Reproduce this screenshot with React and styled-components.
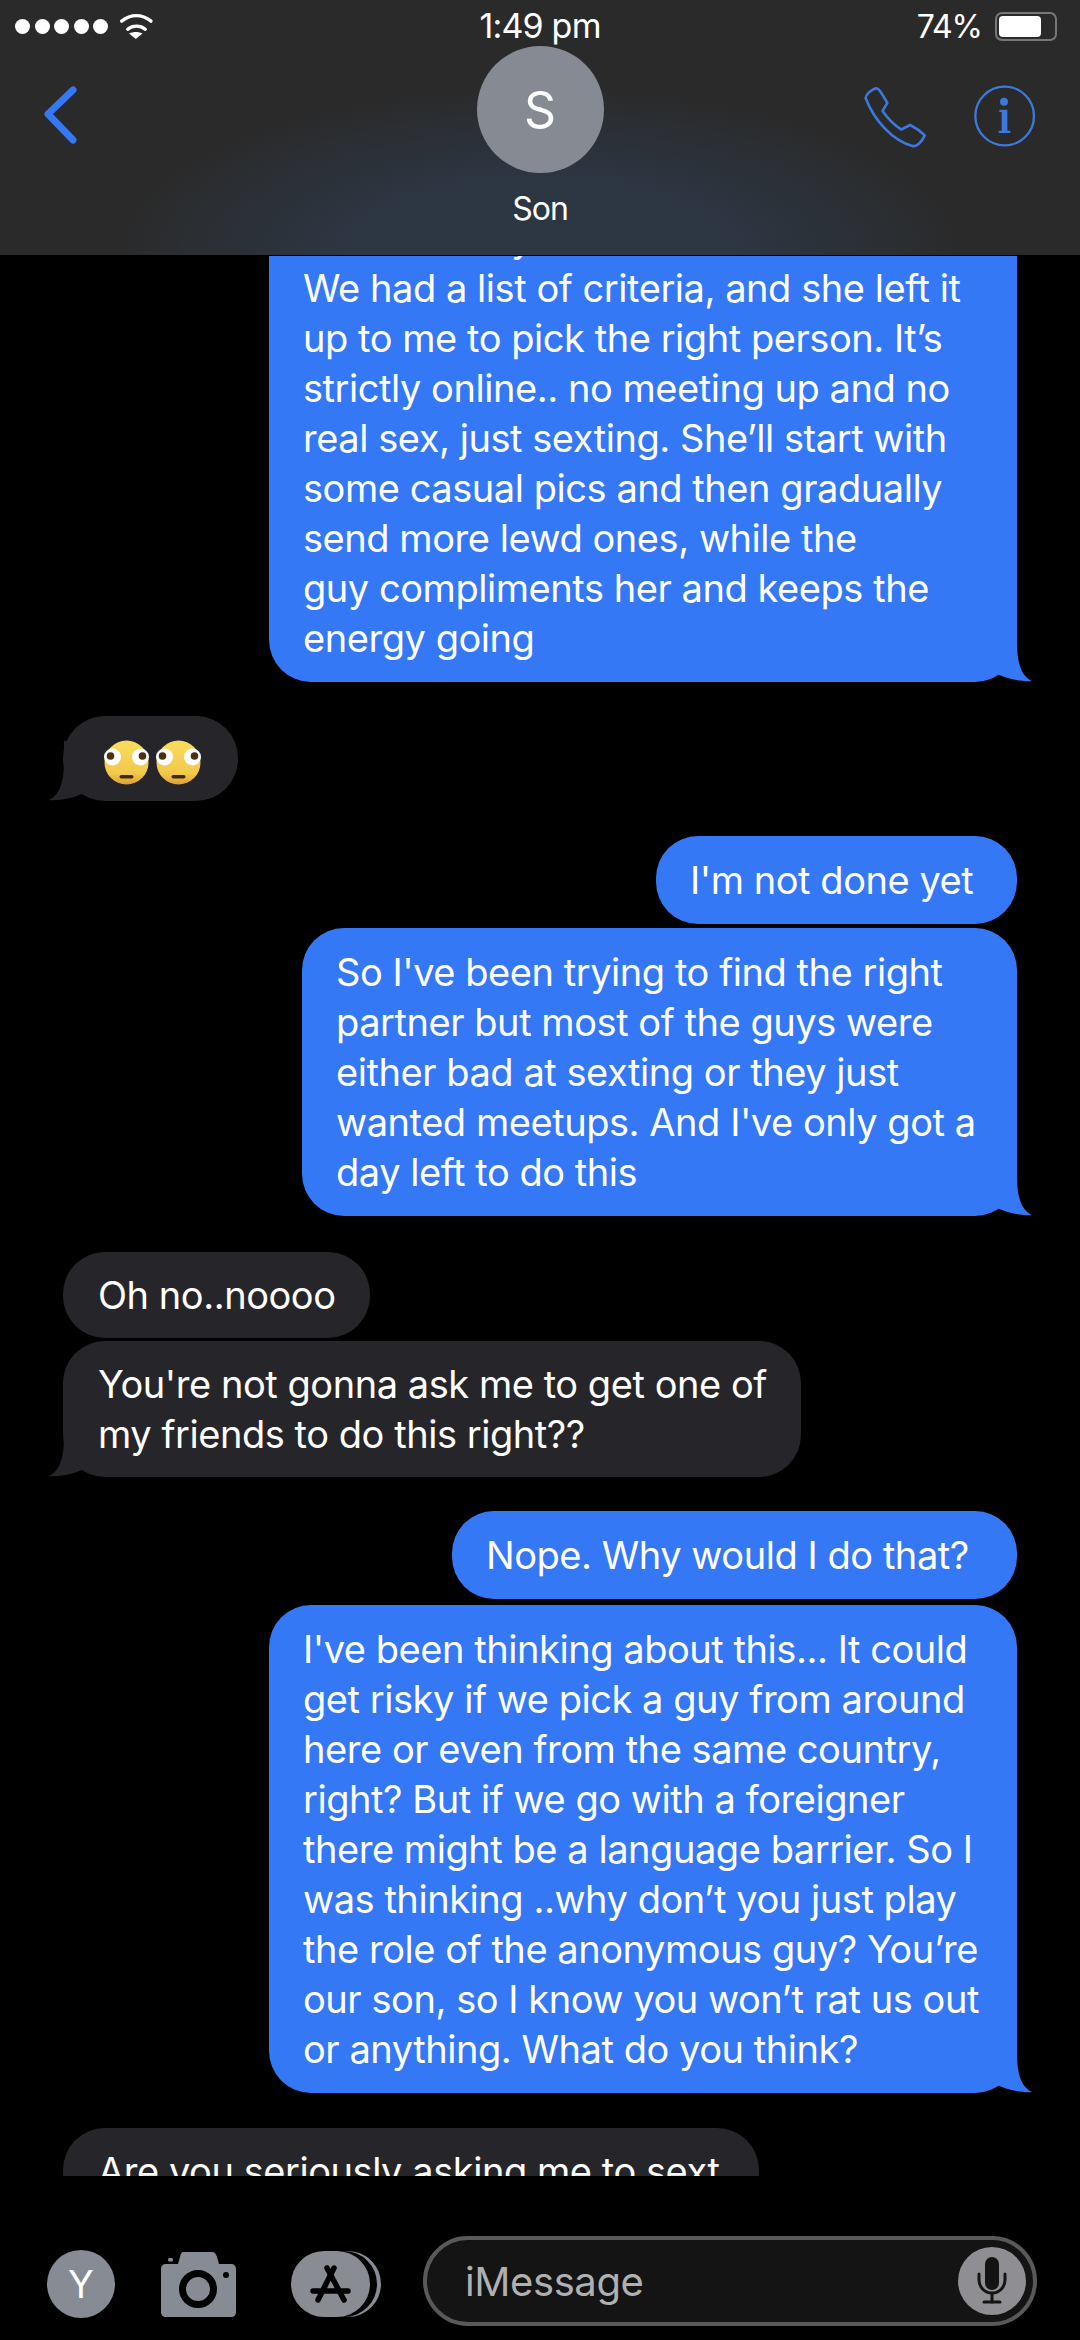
import styled, { createGlobalStyle } from "styled-components";

const GlobalStyle = createGlobalStyle`
  html, body {
    margin: 0;
    padding: 0;
    background: #000;
  }
  * {
    box-sizing: border-box;
  }
`;

const blue = "#3478f6";
const gray = "#26252a";
const iconGray = "#868b94";

const Page = styled.div`
  width: 1080px;
  height: 2340px;
  display: flex;
  flex-direction: column;
  background: #000;
  color: #fff;
  font-family: Inter, "Liberation Sans", sans-serif;
  overflow: hidden;
`;

const Header = styled.header`
  height: 256px;
  flex: none;
  border-bottom: 1px solid #000;
  background: radial-gradient(ellipse 430px 170px at 50% 100%, #2d3643 0%, #2d3643 45%, #2a2a2a 100%);
`;

const StatusBar = styled.div`
  height: 46px;
  padding: 0 23px 0 15px;
  display: grid;
  grid-template-columns: 1fr auto 1fr;
  align-items: center;
  font-size: 32px;
  letter-spacing: -1px;
`;

const StatusLeft = styled.div`
  display: flex;
  align-items: center;
  margin-top: 7px;
`;

const Dot = styled.span`
  width: 15px;
  height: 15px;
  margin-right: 4.6px;
  border-radius: 50%;
  background: #fff;
`;

const StatusRight = styled.div`
  display: flex;
  justify-content: flex-end;
  align-items: center;
  gap: 13px;
  margin-top: 7px;
`;

const Clock = styled.div`
  margin: 5px 0 0 8px;
  font-size: 34px;
  letter-spacing: -0.8px;
`;

const Battery = styled.div`
  width: 62px;
  height: 29px;
  padding: 2px;
  border: 2px solid #777;
  border-radius: 7px;
`;

const BatteryFill = styled.div`
  width: 42px;
  height: 100%;
  border-radius: 4px;
  background: #fff;
`;

const NavRow = styled.div`
  display: grid;
  grid-template-columns: 1fr auto 1fr;
  padding: 0 43px;
`;

const BackButton = styled.div`
  margin-top: 39px;
`;

const Contact = styled.div`
  display: flex;
  flex-direction: column;
  align-items: center;
`;

const Avatar = styled.div`
  width: 127px;
  height: 127px;
  border-radius: 50%;
  background: #858a93;
  display: flex;
  justify-content: center;
  align-items: center;
  font-size: 50px;
`;

const ContactName = styled.div`
  margin-top: 16px;
  font-size: 32px;
  letter-spacing: -1px;
  line-height: 40px;
`;

const NavActions = styled.div`
  display: flex;
  justify-content: flex-end;
  gap: 46px;
  margin-top: 39px;
  margin-right: 1px;
`;

const MessageList = styled.main`
  flex: 1;
  min-height: 0;
  padding: 0 63px;
  display: flex;
  flex-direction: column;
  overflow: hidden;
`;

const Bubble = styled.div`
  position: relative;
  flex: none;
  width: ${(props) => props.$w}px;
  margin-top: ${(props) => props.$gap}px;
  padding: ${(props) => (props.$mine ? "19px 0 19px 34px" : "18px 0 18px 35px")};
  align-self: ${(props) => (props.$mine ? "flex-end" : "flex-start")};
  border-radius: 42px;
  background: ${(props) => (props.$mine ? blue : gray)};
  font-size: 38px;
  line-height: 50px;
  letter-spacing: -0.45px;
`;

const Line = styled.span`
  position: relative;
  z-index: 1;
  display: block;
  white-space: nowrap;
  padding-left: ${(props) => props.$indent || 0}px;
`;

const TailShape = styled.svg`
  position: absolute;
  bottom: 0;
  ${(props) => (props.$mine ? "right: -15px;" : "left: -14px; transform: scaleX(-1);")}
`;

const EmojiRow = styled.div`
  position: relative;
  z-index: 1;
  display: flex;
  gap: 7px;
  margin-bottom: -2px;
  padding: 6px 0 0 6px;
`;

const Footer = styled.footer`
  height: 164px;
  flex: none;
  padding: 60px 43px 14px 47px;
  display: flex;
  align-items: flex-start;
  justify-content: space-between;
`;

const Tools = styled.div`
  display: flex;
  align-items: center;
  gap: 46px;
  height: 68px;
  margin-top: 14px;
`;

const UserBadge = styled.div`
  width: 68px;
  height: 68px;
  border-radius: 50%;
  background: ${iconGray};
  display: flex;
  justify-content: center;
  align-items: center;
  font-size: 38px;
`;

const CameraIcon = styled.svg`
  margin-right: 9px;
`;

const Composer = styled.div`
  width: 614px;
  height: 90px;
  padding: 0 7px 0 38px;
  border: 4px solid #595959;
  border-radius: 45px;
  background: #141414;
  display: flex;
  justify-content: space-between;
  align-items: center;
`;

const Placeholder = styled.div`
  font-size: 40px;
  color: #b0b0b0;
  letter-spacing: -0.4px;
`;

const MicButton = styled.div`
  width: 68px;
  height: 68px;
  border-radius: 50%;
  background: #8e8e93;
`;

const Tail = ({ mine }) => (
  <TailShape $mine={mine} width="75" height="60" viewBox="0 0 75 60" fill={mine ? blue : gray}>
    <path d="M0 0H60V20C60 40 64 54 75 59C65 60 50 57 40 52C30 57 15 60 0 60Z" />
  </TailShape>
);

const RollingEyes = () => (
  <svg width="45" height="45" viewBox="0 0 45 45">
    <defs>
      <linearGradient id="face" x1="0" y1="0" x2="0" y2="1">
        <stop offset="0" stopColor="#f8dc5e" />
        <stop offset="0.75" stopColor="#f2c94b" />
        <stop offset="1" stopColor="#dd9f32" />
      </linearGradient>
    </defs>
    <circle cx="22.5" cy="22.5" r="22" fill="url(#face)" />
    <circle cx="8.5" cy="17" r="8.5" fill="#fff" />
    <circle cx="36.5" cy="17" r="8.5" fill="#fff" />
    <circle cx="6.5" cy="16" r="3.8" fill="#4a3110" />
    <circle cx="38.5" cy="16" r="3.8" fill="#4a3110" />
    <rect x="15.5" y="35" width="14" height="3.4" rx="1.7" fill="#3d2a12" />
  </svg>
);

const Message = ({ mine, w, gap, tail, lines, indentFirst }) => (
  <Bubble $mine={mine} $w={w} $gap={gap}>
    {lines.map((text, i) => (
      <Line key={i} $indent={i === 0 ? indentFirst : 0}>
        {text}
      </Line>
    ))}
    {tail && <Tail mine={mine} />}
  </Bubble>
);

export default function App() {
  return (
    <Page>
      <GlobalStyle />
      <Header>
        <StatusBar>
          <StatusLeft>
            <Dot />
            <Dot />
            <Dot />
            <Dot />
            <Dot />
            <svg width="35" height="27" viewBox="370 40 104 80" style={{ marginLeft: 6 }}>
              <g fill="none" stroke="#fff" strokeWidth="10" strokeLinecap="round">
                <path d="M378 64C405 42 438 42 465 64" />
                <path d="M396 88C410 76 434 76 448 88" />
              </g>
              <path d="M400 101C412 95 428 95 440 101L420 117Z" fill="#fff" />
            </svg>
          </StatusLeft>
          <Clock>1:49 pm</Clock>
          <StatusRight>
            <span>74%</span>
            <Battery>
              <BatteryFill />
            </Battery>
          </StatusRight>
        </StatusBar>
        <NavRow>
          <BackButton>
            <svg width="36" height="60" viewBox="0 0 36 60" fill="none" stroke={blue} strokeWidth="7" strokeLinecap="round" strokeLinejoin="round">
              <path d="M30 5L5 29L30 55" />
            </svg>
          </BackButton>
          <Contact>
            <Avatar>S</Avatar>
            <ContactName>Son</ContactName>
          </Contact>
          <NavActions>
            <svg width="65" height="65" viewBox="60 45 200 200" fill="none" stroke="#3d78dc" strokeWidth="8" strokeLinejoin="round">
              <path d="M100 55C108 54 112 62 135 100L120 125C138 150 155 168 178 182L205 168C225 178 240 190 250 200C240 222 225 235 212 233C150 215 95 155 68 85C70 72 85 60 100 55Z" />
            </svg>
            <svg width="62" height="62" viewBox="400 50 186 186">
              <circle cx="492" cy="143" r="88" fill="none" stroke="#3d78dc" strokeWidth="7" />
              <circle cx="490" cy="100" r="12" fill="#3d78dc" />
              <path d="M476 124H500V187H509V194H474V187H483V131H476Z" fill="#3d78dc" />
            </svg>
          </NavActions>
        </NavRow>
      </Header>

      <MessageList>
        <Message
          mine
          tail
          w={748}
          gap={-62}
          indentFirst={208}
          lines={[
            "y",
            "We had a list of criteria, and she left it",
            "up to me to pick the right person. It\u2019s",
            "strictly online.. no meeting up and no",
            "real sex, just sexting. She\u2019ll start with",
            "some casual pics and then gradually",
            "send more lewd ones, while the",
            "guy compliments her and keeps the",
            "energy going",
          ]}
        />
        <Bubble $w={175} $gap={34}>
          <EmojiRow>
            <RollingEyes />
            <RollingEyes />
          </EmojiRow>
          <Tail />
        </Bubble>
        <Message mine w={361} gap={35} lines={["I'm not done yet"]} />
        <Message
          mine
          tail
          w={715}
          gap={4}
          lines={[
            "So I've been trying to find the right",
            "partner but most of the guys were",
            "either bad at sexting or they just",
            "wanted meetups. And I've only got a",
            "day left to do this",
          ]}
        />
        <Message w={307} gap={36} lines={["Oh no..noooo"]} />
        <Message
          tail
          w={738}
          gap={3}
          lines={["You're not gonna ask me to get one of", "my friends to do this right??"]}
        />
        <Message mine w={565} gap={34} lines={["Nope. Why would I do that?"]} />
        <Message
          mine
          tail
          w={748}
          gap={6}
          lines={[
            "I've been thinking about this... It could",
            "get risky if we pick a guy from around",
            "here or even from the same country,",
            "right? But if we go with a foreigner",
            "there might be a language barrier. So I",
            "was thinking ..why don\u2019t you just play",
            "the role of the anonymous guy? You\u2019re",
            "our son, so I know you won\u2019t rat us out",
            "or anything. What do you think?",
          ]}
        />
        <Message w={696} gap={35} lines={["Are you seriously asking me to sext"]} />
      </MessageList>

      <Footer>
        <Tools>
          <UserBadge>Y</UserBadge>
          <CameraIcon width="75" height="65" viewBox="0 0 75 65">
            <path
              d="M23 0H51C54 0 55 2 56 5L58 12H70C73 12 75 14 75 17V60C75 63 73 65 70 65H5C2 65 0 63 0 60V17C0 14 2 12 5 12H17L19 5C20 2 20 0 23 0Z"
              fill={iconGray}
            />
            <rect x="7" y="6" width="5" height="3.5" rx="1.5" fill={iconGray} />
            <circle cx="37" cy="37" r="15.5" fill="none" stroke="#000" strokeWidth="7" />
            <circle cx="65" cy="23" r="3" fill="#000" />
          </CameraIcon>
          <svg width="90" height="66" viewBox="0 0 90 66">
            <rect x="10" width="80" height="66" rx="33" fill={iconGray} />
            <rect x="5" width="81" height="66" rx="33" fill="#000" />
            <rect width="79" height="66" rx="33" fill="#8a8c94" />
            <g stroke="#000" strokeWidth="5.5" strokeLinecap="round" fill="none">
              <path d="M43 17L27 49" />
              <path d="M36 17L53 49" />
              <path d="M22 40H57" />
            </g>
          </svg>
        </Tools>
        <Composer>
          <Placeholder>iMessage</Placeholder>
          <MicButton>
            <svg width="68" height="68" viewBox="0 0 68 68">
              <rect x="27" y="10" width="14" height="33" rx="7" fill="#141414" />
              <g fill="none" stroke="#141414" strokeWidth="3" strokeLinecap="round">
                <path d="M21 27V33A13 13 0 0 0 47 33V27" />
                <path d="M34 47V55" />
                <path d="M26 55H42" />
              </g>
            </svg>
          </MicButton>
        </Composer>
      </Footer>
    </Page>
  );
}
